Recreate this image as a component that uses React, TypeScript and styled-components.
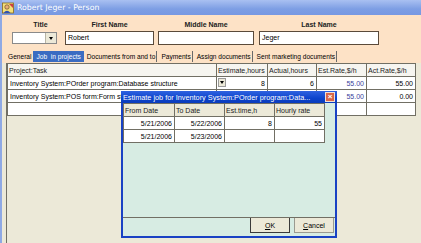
import styled, { createGlobalStyle } from 'styled-components';

const GlobalStyle = createGlobalStyle`
  html, body {
    margin: 0;
    padding: 0;
    background: #ece9d8;
  }
  body {
    font-family: 'Liberation Sans', Arial, sans-serif;
    font-size: 7px;
    color: #000;
  }
`;

const projectRows = [
  { task: 'Inventory System:POrder program:Database structure', est: '8', act: '6', estRate: '55.00', actRate: '55.00', combo: true },
  { task: 'Inventory System:POS form:Form structure', est: '', act: '', estRate: '55.00', actRate: '0.00', combo: false },
  { task: '', est: '', act: '', estRate: '', actRate: '', combo: false },
];

const estimateRows = [
  { from: '5/21/2006', to: '5/22/2006', time: '8', rate: '55' },
  { from: '5/21/2006', to: '5/23/2006', time: '', rate: '' },
];

const tabs = ['General', 'Job  in projects', 'Documents from and to', 'Payments', 'Assign documents', 'Sent marketing documents'];

function PersonIcon() {
  return (
    <svg width="12" height="12" viewBox="0 0 12 12">
      <rect x="0.5" y="1" width="11" height="10" fill="#f4e07a" stroke="#8a6a1a" strokeWidth="0.8" />
      <circle cx="5" cy="5" r="2.2" fill="#e8b078" stroke="#5a3a1a" strokeWidth="0.6" />
      <path d="M1.5 11 Q5 6.5 8.5 11 Z" fill="#3050b0" />
      <path d="M7 2 L11 2 L11 6 Z" fill="#d04040" />
    </svg>
  );
}

export default function App() {
  return (
    <>
      <GlobalStyle />
      <Window>
        <TitleBar>
          <PersonIcon />
          <span>Robert Jeger - Person</span>
        </TitleBar>
        <Header>
          <Field $width={45} $offset={0}>
            <Label $shift={12}>Title</Label>
            <Combo>
              <ComboButton>
                <Arrow />
              </ComboButton>
            </Combo>
          </Field>
          <Field $width={89} $offset={8}>
            <Label>First Name</Label>
            <TextBox>Robert</TextBox>
          </Field>
          <Field $width={96} $offset={4}>
            <Label>Middle Name</Label>
            <TextBox />
          </Field>
          <Field $width={120} $offset={5}>
            <Label>Last Name</Label>
            <TextBox>Jeger</TextBox>
          </Field>
        </Header>
        <TabStrip>
          {tabs.map((t, i) => (
            <Tab key={t} $active={i === 1} $sep={i > 1}>
              {t}
            </Tab>
          ))}
        </TabStrip>
        <GridPanel>
          <Grid $width={409}>
            <colgroup>
              <col style={{ width: 209 }} />
              <col style={{ width: 51 }} />
              <col style={{ width: 49 }} />
              <col style={{ width: 50 }} />
              <col style={{ width: 49 }} />
            </colgroup>
            <thead>
              <tr>
                <HeadCell>Project:Task</HeadCell>
                <HeadCell>Estimate,hours</HeadCell>
                <HeadCell>Actual,hours</HeadCell>
                <HeadCell>Est.Rate,$/h</HeadCell>
                <HeadCell>Act.Rate,$/h</HeadCell>
              </tr>
            </thead>
            <tbody>
              {projectRows.map((r, i) => (
                <tr key={i}>
                  <Cell>{r.task}</Cell>
                  <Cell $right>
                    {r.combo && (
                      <CellButton>
                        <Arrow />
                      </CellButton>
                    )}
                    {r.est}
                  </Cell>
                  <Cell $right>{r.act}</Cell>
                  <Cell $right $blue>{r.estRate}</Cell>
                  <Cell $right>{r.actRate}</Cell>
                </tr>
              ))}
            </tbody>
          </Grid>
        </GridPanel>
      </Window>

      <Dialog>
        <DialogTitle>
          <TitleText>Estimate job for Inventory System:POrder program:Data...</TitleText>
          <CloseButton>×</CloseButton>
        </DialogTitle>
        <DialogBody>
          <Grid $width={202}>
            <colgroup>
              <col style={{ width: 51 }} />
              <col style={{ width: 50 }} />
              <col style={{ width: 50 }} />
              <col style={{ width: 50 }} />
            </colgroup>
            <thead>
              <tr>
                <HeadCell $beige>From Date</HeadCell>
                <HeadCell $beige>To Date</HeadCell>
                <HeadCell $beige>Est.time,h</HeadCell>
                <HeadCell $beige>Hourly rate</HeadCell>
              </tr>
            </thead>
            <tbody>
              {estimateRows.map((r, i) => (
                <tr key={i}>
                  <Cell $right>{r.from}</Cell>
                  <Cell $right>{r.to}</Cell>
                  <Cell $right>{r.time}</Cell>
                  <Cell $right>{r.rate}</Cell>
                </tr>
              ))}
            </tbody>
          </Grid>
        </DialogBody>
        <DialogFooter>
          <Button $default>
            <u>O</u>K
          </Button>
          <Button>
            <u>C</u>ancel
          </Button>
        </DialogFooter>
      </Dialog>
    </>
  );
}

const Window = styled.div`
  width: 421px;
  height: 243px;
  display: flex;
  flex-direction: column;
  overflow: hidden;
  background: #ece9d8;
  border-left: 2px solid #8fa9e4;
  box-sizing: border-box;
`;

const TitleBar = styled.div`
  height: 15px;
  flex: none;
  display: flex;
  align-items: center;
  gap: 3px;
  padding-left: 2px;
  margin-left: -2px;
  background: linear-gradient(#a9c0f1, #7d9ee4 60%, #7798e2);
  color: #fff;
  font-family: 'DejaVu Sans', Verdana, sans-serif;
  font-size: 7.8px;
`;

const Header = styled.div`
  flex: none;
  height: 32px;
  background: #fde2c6;
  display: flex;
  align-items: flex-start;
  padding: 6px 0 0 10px;
  box-sizing: border-box;
`;

const Field = styled.div<{ $width: number; $offset: number }>`
  width: ${(p) => p.$width}px;
  margin-left: ${(p) => p.$offset}px;
  display: flex;
  flex-direction: column;
  align-items: center;
  gap: 2px;
`;

const Label = styled.div<{ $shift?: number }>`
  font-weight: bold;
  font-size: 7px;
  line-height: 8px;
  color: #222;
  padding-left: ${(p) => p.$shift ?? 0}px;
`;

const TextBox = styled.div`
  width: 100%;
  height: 14px;
  box-sizing: border-box;
  background: #fff;
  border: 1px solid #5a4a3a;
  padding: 1px 2px;
  font-size: 7px;
  line-height: 10px;
`;

const Combo = styled.div`
  width: 100%;
  height: 12px;
  margin-top: 1px;
  box-sizing: border-box;
  background: #fff;
  border: 1px solid #8a8a8a;
  display: flex;
  justify-content: flex-end;
`;

const ComboButton = styled.div`
  width: 10px;
  background: #ece9d8;
  border-left: 1px solid #b8b4a4;
  display: flex;
  align-items: center;
  justify-content: center;
`;

const Arrow = styled.span`
  width: 0;
  height: 0;
  border-left: 2.5px solid transparent;
  border-right: 2.5px solid transparent;
  border-top: 3px solid #000;
`;

const TabStrip = styled.div`
  flex: none;
  height: 16px;
  background: #fde2c6;
  display: flex;
  align-items: flex-start;
  padding: 4px 0 0 5px;
  box-sizing: border-box;
`;

const Tab = styled.div<{ $active?: boolean; $sep?: boolean }>`
  height: 11px;
  line-height: 11px;
  padding: ${(p) => (p.$active ? '0 3px' : '0 1px')};
  white-space: pre;
  font-size: 6.6px;
  background: ${(p) => (p.$active ? '#3a6cc2' : 'transparent')};
  color: ${(p) => (p.$active ? '#fff' : '#000')};
  border-right: ${(p) => (p.$sep ? '1px solid #6a6a6a' : 'none')};
  margin-right: ${(p) => (p.$active ? 2 : p.$sep ? 3 : 1)}px;
`;

const GridPanel = styled.div`
  flex: 1;
  margin-left: 4px;
  border-left: 1px solid #716f64;
`;

const Grid = styled.table<{ $width: number }>`
  width: ${(p) => p.$width}px;
  border-collapse: collapse;
  table-layout: fixed;
  font-size: 7px;
`;

const HeadCell = styled.th<{ $beige?: boolean }>`
  height: 12px;
  padding: 0 1px;
  text-align: left;
  font-weight: normal;
  white-space: nowrap;
  overflow: hidden;
  background: ${(p) => (p.$beige ? '#ece9d8' : '#f6f5f0')};
  color: #222;
  border: 1px solid #716f64;
`;

const Cell = styled.td<{ $right?: boolean; $blue?: boolean }>`
  position: relative;
  height: 12px;
  padding: 0 2px;
  white-space: nowrap;
  overflow: hidden;
  text-align: ${(p) => (p.$right ? 'right' : 'left')};
  color: ${(p) => (p.$blue ? '#3b3f9c' : '#000')};
  background: #fff;
  border: 1px solid #716f64;
`;

const CellButton = styled.span`
  position: absolute;
  left: 1px;
  top: 1px;
  width: 8px;
  height: 9px;
  box-sizing: border-box;
  background: #ece9d8;
  border: 1px solid #9a9a9a;
  display: flex;
  align-items: center;
  justify-content: center;
`;

const Dialog = styled.div`
  position: absolute;
  left: 121px;
  top: 91px;
  width: 216px;
  height: 147px;
  box-sizing: border-box;
  border: 2px solid #1942c4;
  border-top: none;
  background: #d7ece3;
  display: flex;
  flex-direction: column;
`;

const DialogTitle = styled.div`
  height: 12px;
  margin: 0 -2px;
  padding: 0 2px 0 2px;
  display: flex;
  align-items: center;
  gap: 1px;
  background: linear-gradient(#2f62e0, #0d44cc 60%, #0a3cbc);
  color: #fff;
  font-family: 'Liberation Sans', Arial, sans-serif;
  font-size: 7.3px;
`;

const TitleText = styled.span`
  flex: 1;
  min-width: 0;
  white-space: nowrap;
  overflow: hidden;
`;

const CloseButton = styled.span`
  width: 8px;
  height: 8px;
  flex: none;
  background: #d9664a;
  border: 1px solid #f0e0d8;
  color: #fff;
  font-size: 8px;
  line-height: 7px;
  text-align: center;
  font-weight: bold;
`;

const DialogBody = styled.div`
  flex: 1;
`;

const DialogFooter = styled.div`
  height: 18px;
  border-top: 1px solid #716f64;
  display: flex;
  justify-content: flex-end;
  gap: 4px;
  padding-right: 1px;
`;

const Button = styled.div<{ $default?: boolean }>`
  width: 40px;
  height: 15px;
  box-sizing: border-box;
  background: #ece9d8;
  border: 1px solid ${(p) => (p.$default ? '#3a3a3a' : '#9a9a90')};
  border-top: none;
  font-size: 7px;
  display: flex;
  align-items: center;
  justify-content: center;
`;
